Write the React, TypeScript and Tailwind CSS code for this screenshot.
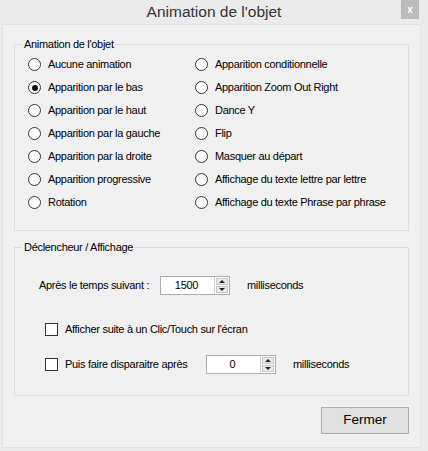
import React from "react";

const leftItems = [
  "Aucune animation",
  "Apparition par le bas",
  "Apparition par le haut",
  "Apparition par la gauche",
  "Apparition par la droite",
  "Apparition progressive",
  "Rotation",
];
const rightItems = [
  "Apparition conditionnelle",
  "Apparition Zoom Out Right",
  "Dance Y",
  "Flip",
  "Masquer au départ",
  "Affichage du texte lettre par lettre",
  "Affichage du texte Phrase par phrase",
];

function Radio({ label, checked }: { label: string; checked?: boolean }) {
  return (
    <div className="flex items-center h-[23px] gap-[7px]">
      <span className="w-[13px] h-[13px] rounded-full border border-[#333] bg-white flex items-center justify-center shrink-0">
        {checked && <span className="w-[6px] h-[6px] rounded-full bg-[#111]" />}
      </span>
      <span className="whitespace-nowrap">{label}</span>
    </div>
  );
}

function Spin({ value }: { value: string }) {
  return (
    <div className="w-[70px] h-[19px] border border-[#abadb3] bg-white flex">
      <div className="flex-1 flex items-center justify-center pr-[2px] leading-none">{value}</div>
      <div className="w-[15px] flex flex-col border-l border-[#d0d0d0] p-[1px] gap-[1px]">
        <div className="flex-1 bg-[#e9e9e9] border border-[#c8c8c8] flex items-center justify-center">
          <span className="w-0 h-0 border-l-[3px] border-r-[3px] border-b-[3px] border-l-transparent border-r-transparent border-b-[#222]" />
        </div>
        <div className="flex-1 bg-[#e9e9e9] border border-[#c8c8c8] flex items-center justify-center">
          <span className="w-0 h-0 border-l-[3px] border-r-[3px] border-t-[3px] border-l-transparent border-r-transparent border-t-[#222]" />
        </div>
      </div>
    </div>
  );
}

function Check({ label }: { label: string }) {
  return (
    <div className="flex items-center gap-[7px]">
      <span className="w-[13px] h-[13px] border border-[#333] bg-white shrink-0" />
      <span className="whitespace-nowrap">{label}</span>
    </div>
  );
}

export default function App() {
  return (
    <div
      className="w-[428px] h-[451px] bg-[#ebebeb] flex flex-col text-[11px] text-black tracking-[-0.3px]"
      style={{ fontFamily: '"Liberation Sans", Arial, sans-serif' }}
    >
      <div className="h-[24px] relative flex items-center justify-center shrink-0">
        <span className="text-[15.5px] text-[#333] tracking-normal">Animation de l'objet</span>
        <span className="absolute right-[9px] top-0 w-[18px] h-[19px] bg-[#bcbcbc] flex items-center justify-center text-white text-[10px] font-bold leading-none">
          x
        </span>
      </div>
      <div className="ml-[2px] mr-[7px] mb-[3px] flex-1 bg-[#f0f0f0] border border-[#e2e2e2] flex flex-col px-[11px]">
        <fieldset className="mt-[12px] border border-[#dcdcdc] pl-[13px] pr-2 pt-[2px] pb-[16px]">
          <legend className="ml-[-6px] px-[2px] leading-[14px]">Animation de l'objet</legend>
          <div className="grid grid-cols-[167px_1fr]">
            <div className="flex flex-col">
              {leftItems.map((t, i) => (
                <Radio key={t} label={t} checked={i === 1} />
              ))}
            </div>
            <div className="flex flex-col">
              {rightItems.map((t) => (
                <Radio key={t} label={t} />
              ))}
            </div>
          </div>
        </fieldset>
        <fieldset className="mt-[9px] border border-[#dcdcdc] pt-[22px] pb-[21px]">
          <legend className="ml-[7px] px-[2px] leading-[14px]">Déclencheur / Affichage</legend>
          <div className="flex items-center pl-[24px]">
            <span className="w-[121px] whitespace-nowrap">Après le temps suivant :</span>
            <Spin value="1500" />
            <span className="ml-[17px]">milliseconds</span>
          </div>
          <div className="pl-[30px] mt-[26px]">
            <Check label="Afficher suite à un Clic/Touch sur l'écran" />
          </div>
          <div className="pl-[30px] mt-[17px] flex items-center">
            <div className="w-[161px]">
              <Check label="Puis faire disparaitre après" />
            </div>
            <Spin value="0" />
            <span className="ml-[17px]">milliseconds</span>
          </div>
        </fieldset>
        <div className="flex justify-end mt-[11px]">
          <button className="w-[88px] h-[27px] border border-[#adadad] bg-[#e1e1e1] text-[13.5px] tracking-normal text-black">
            Fermer
          </button>
        </div>
      </div>
    </div>
  );
}
